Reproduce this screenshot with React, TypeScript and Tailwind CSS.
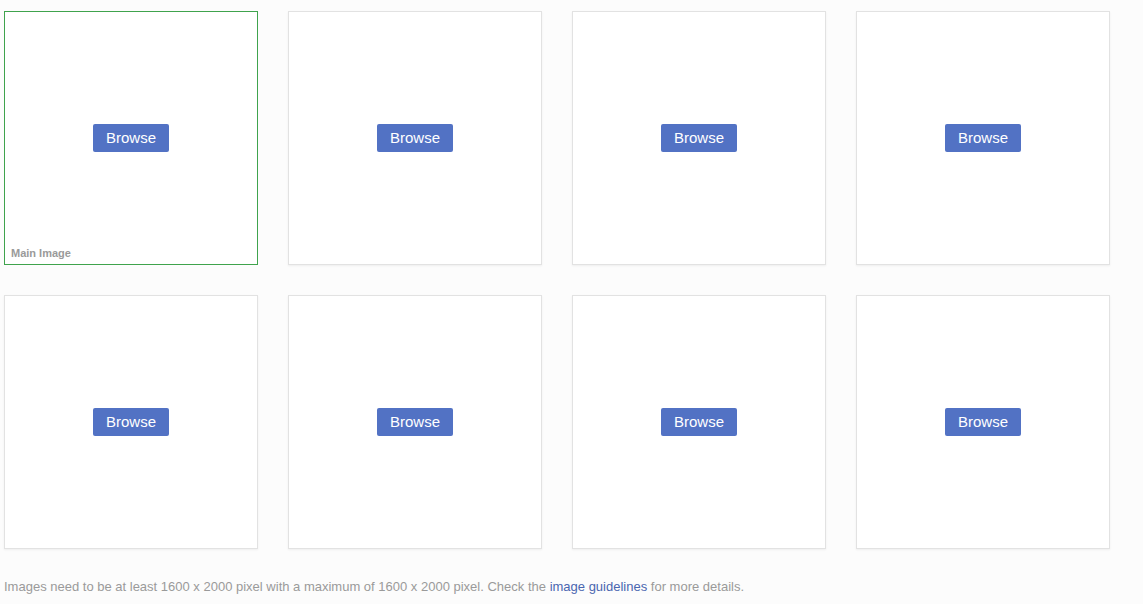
import React from "react";

function Card({ main }: { main?: boolean }) {
  return (
    <div
      className={
        "relative flex h-[254px] w-[254px] items-center justify-center bg-white " +
        (main
          ? "border border-[#3fa34d]"
          : "border border-[#e2e2e2] shadow-[0_1px_2px_rgba(0,0,0,0.06)]")
      }
    >
      <button className="h-[28px] w-[76px] rounded-[2px] bg-[#5272c4] pb-[2px] text-[15px] leading-none text-white">
        Browse
      </button>
      {main && (
        <span className="absolute bottom-[5px] left-[6px] text-[11px] font-bold leading-none text-[#9a9a9a]">
          Main Image
        </span>
      )}
    </div>
  );
}

export default function App() {
  return (
    <div
      className="min-h-[604px] w-full bg-[#fcfcfc] pl-[4px] pt-[11px]"
      style={{ fontFamily: '"Liberation Sans", Arial, sans-serif' }}
    >
      <div className="grid w-fit grid-cols-[repeat(4,254px)] gap-[30px]">
        <Card main />
        <Card />
        <Card />
        <Card />
        <Card />
        <Card />
        <Card />
        <Card />
      </div>
      <p className="mt-[30px] text-[13px] leading-[16px] text-[#9a9a9a]">
        Images need to be at least 1600 x 2000 pixel with a maximum of 1600 x 2000 pixel. Check the{" "}
        <a className="text-[#4a66b0]">image guidelines</a> for more details.
      </p>
    </div>
  );
}
